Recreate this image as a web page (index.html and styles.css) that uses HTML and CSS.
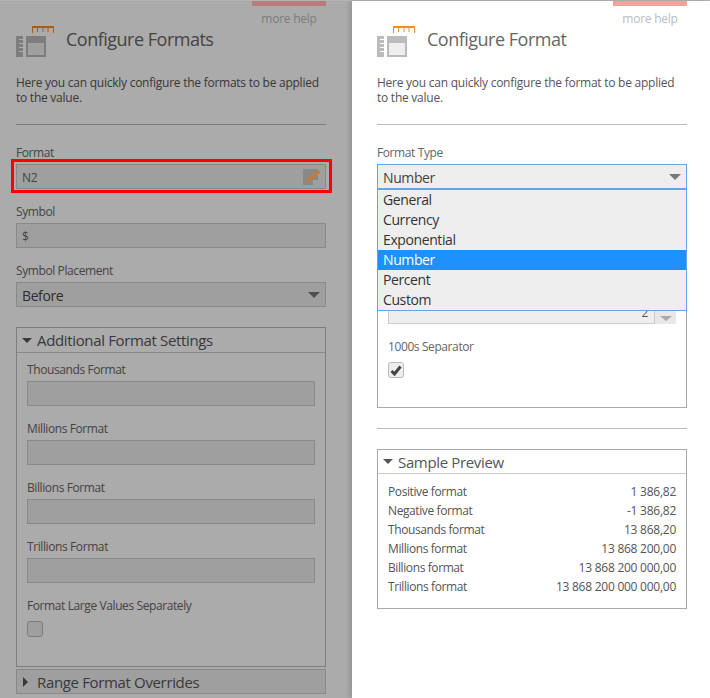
FILE: index.html
```html
<!DOCTYPE html>
<html lang="en">
<head>
<meta charset="utf-8">
<title>Configure Format</title>
<link rel="stylesheet" href="styles.css">
</head>
<body>
<div class="page">
  <section class="panel panel-left">
    <div class="help"><div class="help-bar"></div><div class="help-text">more help</div></div>
    <header class="head">
      <svg class="logo" width="38" height="32" viewBox="0 0 38 32"><path class="logo-gray" d="M0 10h7v21H0z"/><path class="logo-lines" d="M3 13.500h4M3 17.500h4M3 21.500h4M3 25.500h4"/><path class="logo-gray" d="M10 10h20v21H10z"/><path class="logo-white" d="M12 17h16v12H12z"/><path class="logo-orange" d="M16 0h22v2H16z"/><path class="logo-ticks" d="M16.500 2v5M21.500 2v4M27 2v4M32 2v4M37.500 2v5"/></svg>
      <h1 class="title">Configure Formats</h1>
    </header>
    <p class="desc">Here you can quickly configure the formats to be applied to the value.</p>
    <hr class="rule">
    <label class="lab lab-first">Format</label>
    <div class="field field-icon"><span>N2</span>
      <svg class="pencil" width="18" height="19" viewBox="0 0 18 19"><path class="pencil-page" d="M0 1h15v11l-5 5H0z"/><path class="pencil-fold" d="M10 17v-5h5z"/><path class="pencil-body" d="M2 15l1.500-3.500L15 2l3 2L6.500 13.500z"/></svg>
    </div>
    <label class="lab">Symbol</label>
    <div class="field"><span>$</span></div>
    <label class="lab">Symbol Placement</label>
    <div class="select"><span>Before</span><i class="caret"></i></div>
    <div class="group">
      <div class="group-head"><i class="tri-down"></i>Additional Format Settings</div>
      <div class="group-body">
        <label class="lab">Thousands Format</label>
        <div class="field"></div>
        <label class="lab">Millions Format</label>
        <div class="field"></div>
        <label class="lab">Billions Format</label>
        <div class="field"></div>
        <label class="lab">Trillions Format</label>
        <div class="field"></div>
        <label class="lab">Format Large Values Separately</label>
        <div class="check"></div>
      </div>
    </div>
    <div class="collapsed"><i class="tri-right"></i>Range Format Overrides</div>
    <div class="shade"></div>
    <div class="highlight"></div>
  </section>

  <section class="panel panel-right">
    <div class="help"><div class="help-bar"></div><div class="help-text">more help</div></div>
    <header class="head">
      <svg class="logo" width="38" height="32" viewBox="0 0 38 32"><path class="logo-gray" d="M0 10h7v21H0z"/><path class="logo-lines" d="M3 13.500h4M3 17.500h4M3 21.500h4M3 25.500h4"/><path class="logo-gray" d="M10 10h20v21H10z"/><path class="logo-white" d="M12 17h16v12H12z"/><path class="logo-orange" d="M16 0h22v2H16z"/><path class="logo-ticks" d="M16.500 2v5M21.500 2v4M27 2v4M32 2v4M37.500 2v5"/></svg>
      <h1 class="title">Configure Format</h1>
    </header>
    <p class="desc">Here you can quickly configure the format to be applied to the value.</p>
    <hr class="rule">
    <label class="lab lab-first">Format Type</label>
    <div class="combo">
      <div class="select select-open"><span>Number</span><i class="caret"></i></div>
      <ul class="menu">
        <li>General</li>
        <li>Currency</li>
        <li>Exponential</li>
        <li class="active">Number</li>
        <li>Percent</li>
        <li>Custom</li>
      </ul>
    </div>
    <div class="options">
      <div class="spin"><div class="spin-value">2</div><div class="spin-btn"><i class="caret caret-light"></i></div></div>
      <label class="lab">1000s Separator</label>
      <div class="check"><svg width="12" height="11" viewBox="0 0 12 11"><path class="tick" d="M1.500 6l3 3L10.500 1.500"/></svg></div>
    </div>
    <hr class="rule rule-2">
    <div class="group group-preview">
      <div class="group-head"><i class="tri-down"></i>Sample Preview</div>
      <dl class="rows">
        <div class="row"><dt>Positive format</dt><dd>1 386,82</dd></div>
        <div class="row"><dt>Negative format</dt><dd>-1 386,82</dd></div>
        <div class="row"><dt>Thousands format</dt><dd>13 868,20</dd></div>
        <div class="row"><dt>Millions format</dt><dd>13 868 200,00</dd></div>
        <div class="row"><dt>Billions format</dt><dd>13 868 200 000,00</dd></div>
        <div class="row"><dt>Trillions format</dt><dd>13 868 200 000 000,00</dd></div>
      </dl>
    </div>
  </section>
</div>
</body>
</html>
```
FILE: styles.css
```css
* { box-sizing: border-box; }
html, body { margin: 0; height: 100%; overflow: hidden; }
body { font-family: "Open Sans", "Noto Sans", sans-serif; font-size: 12px; letter-spacing: -0.25px; color: #555; background: #fff; }
.page { display: flex; width: 710px; height: 698px; border-top: 1px solid #b4b4b4; }
.panel { position: relative; display: flex; flex-direction: column; height: 697px; overflow: hidden; }
.panel > * { flex: none; }
.panel-left { width: 352px; padding: 0 26px 0 16px; background: #fff; }
.panel-right { width: 358px; padding: 0 23px 0 25px; box-shadow: -3px 0 4px rgba(0,0,0,.12); }

.help { align-self: flex-end; width: 74px; text-align: center; }
.help-bar { position: relative; z-index: 1; height: 5px; background: #ff9c9c; }
.panel-left .help-bar { background: #ba7b7b; }
.help-text { margin-top: 6px; height: 14px; line-height: 14px; color: #bbb; }

.head { display: flex; align-items: flex-start; height: 36px; }
.logo { flex: none; }
.logo-gray { fill: #bbb; }
.logo-white { fill: #eee; }
.logo-lines { stroke: #fff; stroke-width: 1; fill: none; }
.logo-orange { fill: #f28c28; }
.logo-ticks { stroke: #f28c28; stroke-width: 1; fill: none; }
.title { margin: 1px 0 0 12px; font-size: 18px; font-weight: 400; line-height: 24px; color: #666; letter-spacing: -0.5px; }
.desc { margin: 13px 0 0; line-height: 15px; }
.rule { width: 100%; height: 1px; margin: 19px 0 0; border: 0; background: #b9b9b9; }
.rule-2 { margin-top: 20px; }

.lab { display: block; height: 16px; line-height: 16px; margin-top: 15px; color: #666; letter-spacing: -0.4px; }
.lab-first { margin-top: 20px; }
.field { position: relative; display: flex; align-items: center; height: 25px; margin-top: 3px; padding: 2px 5px 0; border: 1px solid #ccc; background: #eee; color: #666; }
.select { position: relative; display: flex; align-items: center; height: 25px; margin-top: 3px; padding: 1px 5px 0; border: 1px solid #ccc; background: #eee; font-size: 14px; letter-spacing: -0.4px; color: #444; }
.select-open { margin-top: 0; border-color: #66a3ee; }
.caret { position: absolute; right: 5px; top: 9px; width: 0; height: 0; border: 6px solid transparent; border-bottom: 0; border-top: 6px solid #777; }
.caret-light { border-width: 5px 6px 0; border-top-color: #aaa; right: 4px; top: 16px; }
.pencil { position: absolute; z-index: 1; right: 4px; top: 3px; }
.pencil-page { fill: #888; }
.pencil-fold { fill: #a4a4a4; }
.pencil-body { fill: #c47c3e; }

.group { margin-top: 20px; border: 1px solid #bbb; }
.group-head { display: flex; align-items: center; height: 25px; padding-left: 5px; font-size: 15px; letter-spacing: -0.35px; color: #555; border-bottom: 1px solid #ccc; }
.tri-down { width: 0; height: 0; margin-right: 5px; border: 5px solid transparent; border-bottom: 0; border-top: 5px solid #555; }
.tri-right { width: 0; height: 0; margin: 0 9px 0 6px; border: 5px solid transparent; border-right: 0; border-left: 5px solid #555; }
.group-body { padding: 9px 10px 0; height: 313px; }
.group-body .lab:first-child { margin-top: 0; }
.check { width: 16px; height: 16px; margin-top: 7px; display: flex; align-items: center; justify-content: center; border: 1px solid #bbb; border-radius: 3px; background: #eee; }
.tick { fill: none; stroke: #444; stroke-width: 3; }
.collapsed { display: flex; align-items: center; height: 25px; margin-top: 2px; border: 1px solid #ccc; background: #eee; font-size: 15px; letter-spacing: -0.35px; color: #555; }

.shade { position: absolute; inset: 0; background: rgba(0,0,0,.33); }
.highlight { position: absolute; left: 11px; top: 158px; width: 321px; height: 34px; border: 3px solid #f00; }

.combo { position: relative; height: 25px; margin-top: 3px; }
.menu { position: absolute; left: 0; right: 0; top: 25px; z-index: 2; margin: 0; padding: 0; list-style: none; background: #eee; border: 1px solid #66a3ee; font-size: 14px; letter-spacing: -0.4px; color: #333; }
.menu li { height: 20px; line-height: 20px; padding-left: 5px; }
.menu .active { background: #1e90ff; color: #fff; }

.options { height: 219px; padding: 111px 10px 0; border: 1px solid #aaa; border-top: 0; }
.spin { display: flex; height: 24px; }
.spin-value { flex: 1; text-align: right; padding: 1px 6px 0 0; line-height: 22px; background: #eee; border: 1px solid #ccc; }
.spin-btn { position: relative; width: 21px; background: #e8e8e8; }
.group-preview { margin-top: 20px; height: 160px; border-color: #aaa; }
.group-preview .group-head { height: 24px; }
.rows { margin: 8px 0 0; padding: 0 10px; }
.row { display: flex; justify-content: space-between; height: 19px; line-height: 19px; }
.row dt { letter-spacing: -0.4px; }
.row dd { margin: 0; }
```
